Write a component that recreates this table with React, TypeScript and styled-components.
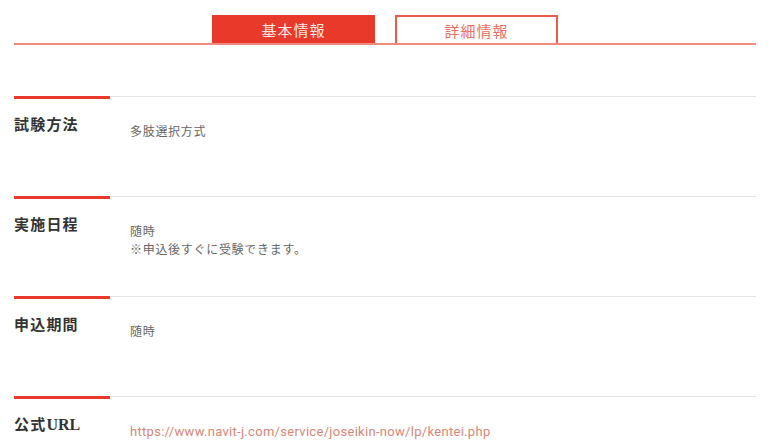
import React from "react";
import styled, { createGlobalStyle } from "styled-components";

const Global = createGlobalStyle`
  html, body { margin: 0; padding: 0; background: #fff; }
  body { font-family: "Noto Sans CJK JP", "Noto Sans", sans-serif; }
`;

const Page = styled.div`
  padding: 15px 12px 0 14px;
`;

const TabBar = styled.div`
  display: flex;
  justify-content: center;
  gap: 20px;
  border-bottom: 2px solid #f08a7c;
`;

const Tab = styled.div<{ $active?: boolean }>`
  width: 163px;
  height: 28px;
  box-sizing: border-box;
  display: flex;
  align-items: center;
  justify-content: center;
  font-size: 15px;
  letter-spacing: 1px;
  background: ${(p) => (p.$active ? "#e8392a" : "#fff")};
  color: ${(p) => (p.$active ? "#fde8e4" : "#ec6f5f")};
  border: ${(p) => (p.$active ? "none" : "2px solid #ec5a4a")};
  border-bottom: none;
`;

const List = styled.div`
  margin-top: 51px;
`;

const Row = styled.div`
  position: relative;
  display: grid;
  grid-template-columns: 116px 1fr;
  box-sizing: border-box;
  height: 100px;
  border-top: 1px solid #e3e3e3;
  &::before {
    content: "";
    position: absolute;
    left: 0;
    top: -1px;
    width: 96px;
    height: 3px;
    background: #e8392a;
  }
`;

const Label = styled.div`
  padding-top: 17px;
  font-family: "Liberation Serif", "Noto Sans CJK JP", serif;
  font-weight: 700;
  font-size: 15px;
  letter-spacing: 1.2px;
  color: #333;
  line-height: 22px;
`;

const Latin = styled.span`
  letter-spacing: 0;
  font-size: 16px;
`;

const Value = styled.div`
  padding-top: 25px;
  font-size: 12px;
  letter-spacing: 0.7px;
  line-height: 18px;
  color: #666;
`;

const Link = styled.a`
  font-family: "Roboto", "Noto Sans", sans-serif;
  font-size: 13px;
  letter-spacing: 0.3px;
  color: #d68676;
  text-decoration: none;
`;

const rows: { key: string; label: React.ReactNode; value: React.ReactNode }[] = [
  { key: "a", label: "試験方法", value: "多肢選択方式" },
  {
    key: "b",
    label: "実施日程",
    value: (
      <>
        随時
        <br />
        ※申込後すぐに受験できます。
      </>
    ),
  },
  { key: "c", label: "申込期間", value: "随時" },
  {
    key: "d",
    label: (
      <>
        公式<Latin>URL</Latin>
      </>
    ),
    value: (
      <Link href="#">https://www.navit-j.com/service/joseikin-now/lp/kentei.php</Link>
    ),
  },
];

export default function App() {
  return (
    <>
      <Global />
      <Page>
        <TabBar>
          <Tab $active>基本情報</Tab>
          <Tab>詳細情報</Tab>
        </TabBar>
        <List>
          {rows.map((r) => (
            <Row key={r.key}>
              <Label>{r.label}</Label>
              <Value>{r.value}</Value>
            </Row>
          ))}
        </List>
      </Page>
    </>
  );
}
